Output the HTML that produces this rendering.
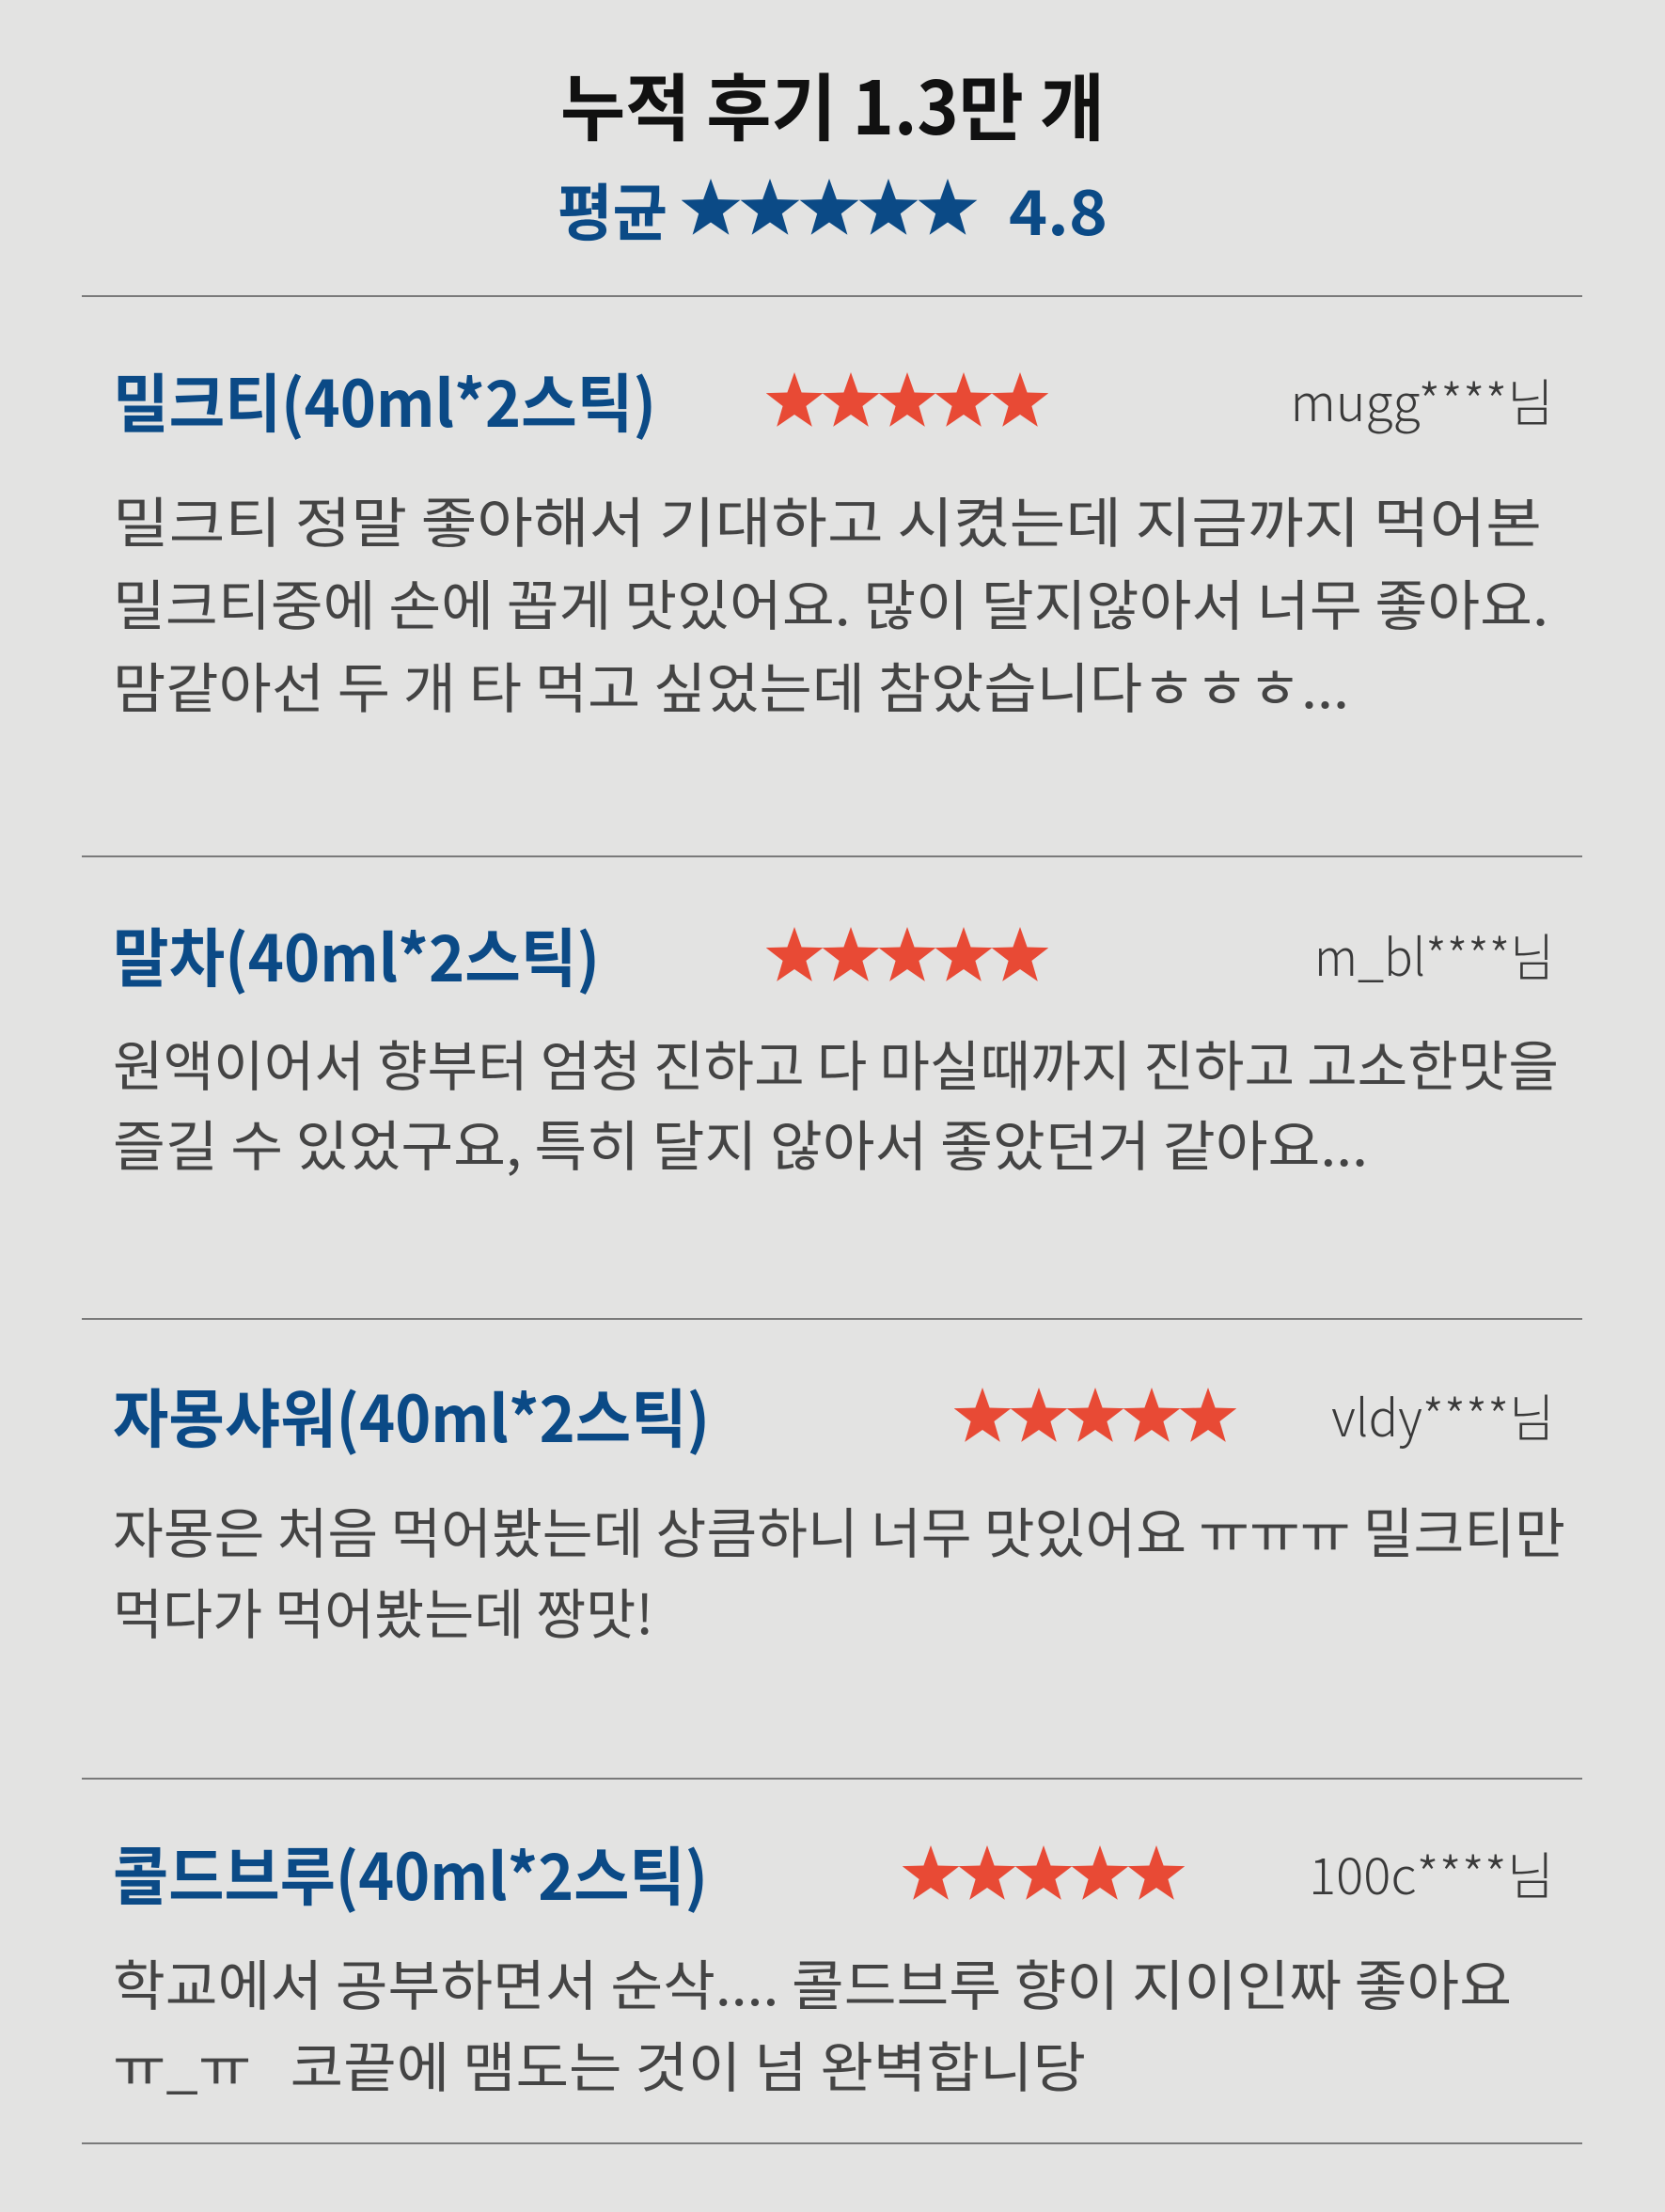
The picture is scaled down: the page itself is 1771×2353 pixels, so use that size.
<!DOCTYPE html>
<html><head><meta charset="utf-8"><style>
html,body{margin:0;padding:0}
body{width:1771px;height:2353px;background:#e3e3e2;position:relative;overflow:hidden;font-family:"Noto Sans CJK KR","Liberation Sans",sans-serif}
.t{position:absolute;white-space:nowrap;line-height:1;transform-origin:0 50%}
.r{transform-origin:100% 50%}
.hr{position:absolute;left:87px;width:1596px;height:2px;background:#7a7a7a}
.title{font-weight:700;color:#0b4a86;font-size:68px}
.body{color:#444;font-size:58px;font-weight:400}
.user{color:#3a3a3a;font-size:54px;font-weight:300}
svg{position:absolute}
</style></head><body>
<div class="t" style="left:596px;top:71px;font-size:78px;font-weight:700;color:#111" data-w="579">누적 후기 1.3만 개</div>
<div class="t" style="left:593px;top:189px;font-size:66px;font-weight:700;color:#0b4a86" data-w="117">평균</div>
<svg style="left:725px;top:190px" width="315" height="62" viewBox="0 0 315 62"><g fill="#0b4a86" id="s"></g></svg>
<div class="t" style="left:1073px;top:189px;font-size:66px;font-weight:700;color:#0b4a86" data-w="105">4.8</div>
<div class="hr" style="top:314px"></div>

<div class="t title" style="left:120px;top:391px" data-w="578">밀크티(40ml*2스틱)</div>
<svg class="st" style="left:815px;top:395px" width="300" height="62"></svg>
<div class="t user r" style="right:118px;top:398px" data-w="280">mugg****님</div>
<div class="t body" style="left:120px;top:523px" data-w="1520">밀크티 정말 좋아해서 기대하고 시켰는데 지금까지 먹어본</div>
<div class="t body" style="left:120px;top:611px" data-w="1527">밀크티중에 손에 꼽게 맛있어요. 많이 달지않아서 너무 좋아요.</div>
<div class="t body" style="left:120px;top:699px" data-w="1315">맘같아선 두 개 타 먹고 싶었는데 참았습니다ㅎㅎㅎ...</div>
<div class="hr" style="top:910px"></div>

<div class="t title" style="left:120px;top:981px" data-w="518">말차(40ml*2스틱)</div>
<svg class="st" style="left:815px;top:985px" width="300" height="62"></svg>
<div class="t user r" style="right:118px;top:988px" data-w="255">m_bl****님</div>
<div class="t body" style="left:120px;top:1101px" data-w="1538">원액이어서 향부터 엄청 진하고 다 마실때까지 진하고 고소한맛을</div>
<div class="t body" style="left:120px;top:1186px" data-w="1335">즐길 수 있었구요, 특히 달지 않아서 좋았던거 같아요...</div>
<div class="hr" style="top:1402px"></div>

<div class="t title" style="left:120px;top:1471px" data-w="635">자몽샤워(40ml*2스틱)</div>
<svg class="st" style="left:1015px;top:1475px" width="300" height="62"></svg>
<div class="t user r" style="right:118px;top:1478px" data-w="237">vldy****님</div>
<div class="t body" style="left:120px;top:1598px" data-w="1545">자몽은 처음 먹어봤는데 상큼하니 너무 맛있어요 ㅠㅠㅠ 밀크티만</div>
<div class="t body" style="left:120px;top:1684px" data-w="575">먹다가 먹어봤는데 짱맛!</div>
<div class="hr" style="top:1891px"></div>

<div class="t title" style="left:120px;top:1958px" data-w="633">콜드브루(40ml*2스틱)</div>
<svg class="st" style="left:960px;top:1962px" width="300" height="62"></svg>
<div class="t user r" style="right:118px;top:1965px" data-w="261">100c****님</div>
<div class="t body" style="left:120px;top:2079px" data-w="1488">학교에서 공부하면서 순삭.... 콜드브루 향이 지이인짜 좋아요</div>
<div class="t body" style="left:120px;top:2166px" data-w="1035">ㅠ_ㅠ &nbsp;&nbsp;코끝에 맴도는 것이 넘 완벽합니당</div>
<div class="hr" style="top:2279px"></div>

<script>
function star(cx,cy,R,r){var p=[];for(var i=0;i<10;i++){var a=-Math.PI/2+i*Math.PI/5,rr=i%2?r:R;p.push((cx+rr*Math.cos(a)).toFixed(1)+","+(cy+rr*Math.sin(a)).toFixed(1));}return p.join(" ");}
var g=document.getElementById('s'),h='';
for(var i=0;i<5;i++)h+='<polygon points="'+star(31+i*63,33,33,13.5)+'"/>';
g.innerHTML=h;
document.querySelectorAll('.st').forEach(function(s){var h='';for(var i=0;i<5;i++)h+='<polygon fill="#e84a35" points="'+star(30+i*60,33,32,13)+'"/>';s.innerHTML=h;});
document.querySelectorAll('.t').forEach(function(e){var w=+e.getAttribute('data-w');if(!w)return;var n=e.getBoundingClientRect().width;if(n>0)e.style.transform='scaleX('+(w/n)+')';});
</script>
</body></html>
